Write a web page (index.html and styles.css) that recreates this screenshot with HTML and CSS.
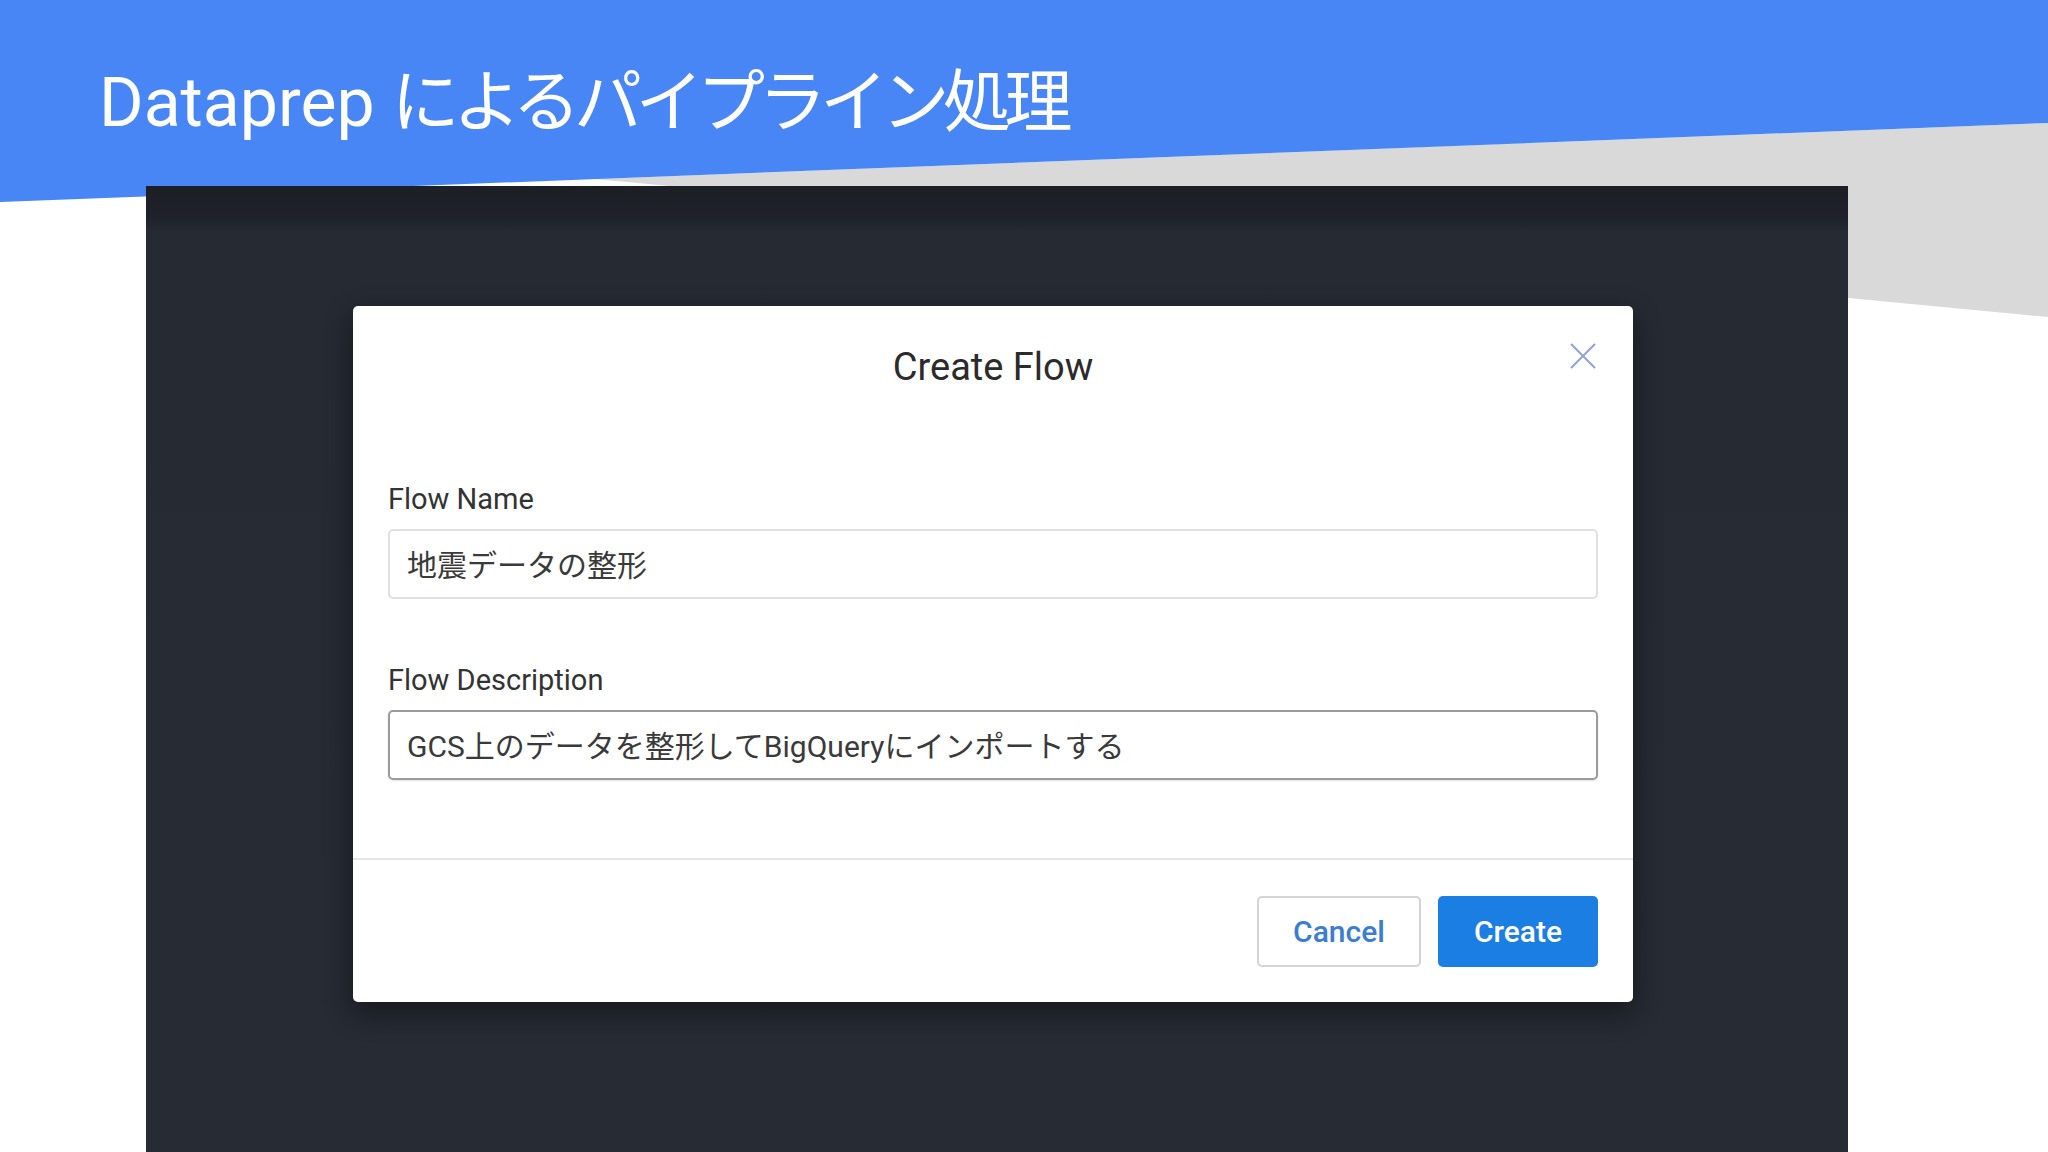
FILE: index.html
```html
<!DOCTYPE html>
<html lang="ja">
<head>
<meta charset="utf-8">
<title>Dataprep によるパイプライン処理</title>
<link rel="stylesheet" href="styles.css">
</head>
<body>
<div class="slide">
  <svg class="slide-bg" width="2048" height="1152" viewBox="0 0 2048 1152" aria-hidden="true">
    <polygon points="595,179 2048,123 2048,317" fill="#d9d9da"/>
    <polygon points="0,0 2048,0 2048,123 0,202" fill="#4786f4"/>
  </svg>
  <h1 class="slide-title">Dataprep <span class="jp">によるパイプライン処理</span></h1>
  <div class="app">
    <div class="dialog">
      <div class="dialog-header">
        <h2 class="dialog-title">Create Flow</h2>
        <svg class="close" width="26" height="26" viewBox="0 0 26 26" aria-hidden="true">
          <path d="M1 1 L25 25 M25 1 L1 25" stroke="#8ea3dc" stroke-width="2" fill="none"/>
        </svg>
      </div>
      <div class="dialog-body">
        <div class="field">
          <div class="label">Flow Name</div>
          <div class="input">地震データの整形</div>
        </div>
        <div class="field">
          <div class="label">Flow Description</div>
          <div class="input focused">GCS上のデータを整形してBigQueryにインポートする</div>
        </div>
      </div>
      <div class="dialog-footer">
        <div class="btn btn-cancel">Cancel</div>
        <div class="btn btn-create">Create</div>
      </div>
    </div>
  </div>
</div>
</body>
</html>
```

FILE: styles.css
```css
html, body {
  margin: 0;
  padding: 0;
  background: #ffffff;
}

.slide {
  position: relative;
  width: 2048px;
  height: 1152px;
  overflow: hidden;
  background: #ffffff;
  font-family: Roboto, "Noto Sans CJK JP", sans-serif;
}

.slide-bg {
  position: absolute;
  left: 0;
  top: 0;
  z-index: 0;
}

.slide-title {
  position: relative;
  z-index: 1;
  margin: 0;
  padding: 63px 0 0 99px;
  height: 80px;
  font-size: 68px;
  line-height: 80px;
  font-weight: 400;
  color: #ffffff;
  white-space: nowrap;
}

.slide-title .jp {
  letter-spacing: -6.5px;
}

.app {
  position: relative;
  z-index: 1;
  margin: 43px 0 0 146px;
  width: 1702px;
  height: 966px;
  box-sizing: border-box;
  padding: 120px 0 0 207px;
  background: linear-gradient(to bottom, #1c1f26 0px, #1e2129 30px, #252a33 46px, #262b34 100%);
}

.dialog {
  position: relative;
  width: 1280px;
  height: 696px;
  box-sizing: border-box;
  background: #ffffff;
  border-radius: 5px;
  box-shadow: 0 10px 28px rgba(0, 0, 0, 0.45);
  display: flex;
  flex-direction: column;
}

.dialog-header {
  flex: none;
  padding-top: 38px;
  text-align: center;
}

.dialog-title {
  margin: 0;
  font-size: 38px;
  line-height: 46px;
  font-weight: 400;
  color: #2b2b2b;
}

.close {
  position: absolute;
  top: 37px;
  right: 37px;
}

.dialog-body {
  flex: none;
  padding: 91px 35px 0 35px;
  display: flex;
  flex-direction: column;
  gap: 63px;
  height: 470px;
  box-sizing: border-box;
  border-bottom: 2px solid #e6e6e6;
}

.field {
  display: flex;
  flex-direction: column;
  gap: 12px;
}

.label {
  font-size: 29px;
  line-height: 36px;
  color: #333333;
}

.input {
  height: 70px;
  box-sizing: border-box;
  border: 2px solid #e0e0e0;
  border-radius: 5px;
  padding: 0 0 2px 17px;
  display: flex;
  align-items: center;
  font-size: 30px;
  color: #3a3a3a;
  white-space: nowrap;
}

.input.focused {
  border-color: #9b9b9b;
  box-shadow: 0 1px 2px rgba(0, 0, 0, 0.12);
}

.dialog-footer {
  flex: 1;
  display: flex;
  justify-content: flex-end;
  align-items: center;
  gap: 17px;
  padding: 0 35px;
}

.btn {
  height: 71px;
  box-sizing: border-box;
  border-radius: 5px;
  display: flex;
  align-items: center;
  justify-content: center;
  font-size: 30px;
  font-weight: 500;
}

.btn-cancel {
  width: 164px;
  border: 2px solid #d4d4d4;
  color: #3a7dd2;
  background: #ffffff;
}

.btn-create {
  width: 160px;
  background: #1b7ee2;
  color: #ffffff;
}
```
